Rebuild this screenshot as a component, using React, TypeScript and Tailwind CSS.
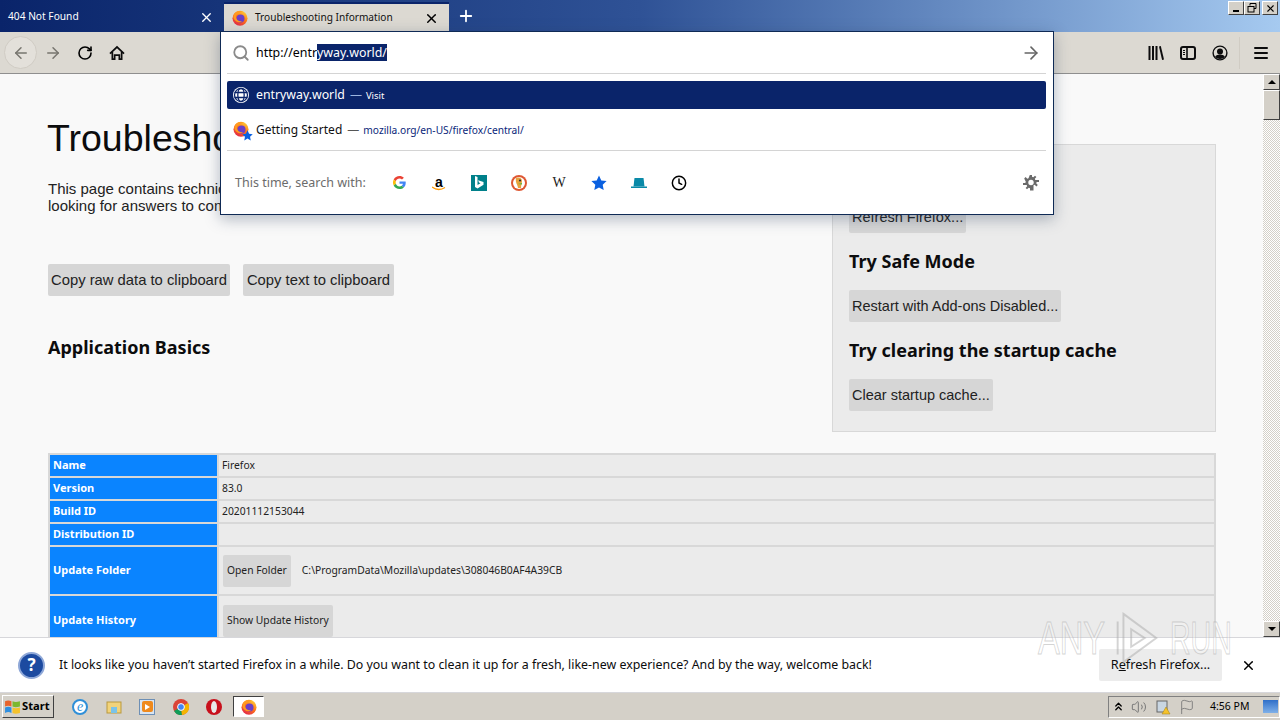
import React from "react";
import { Search, ArrowLeft, ArrowRight, RotateCw, X, Plus, Clock, ChevronsUp, Volume2, Flag } from "lucide-react";

const ui = "font-['Noto_Sans','Liberation_Sans',sans-serif]";

function FirefoxIcon({ size = 16 }: { size?: number }) {
  return (
    <svg width={size} height={size} viewBox="0 0 32 32" className="shrink-0">
      <defs>
        <linearGradient id="ffa" x1="0.8" y1="0" x2="0.2" y2="1">
          <stop offset="0" stopColor="#ffd43a" />
          <stop offset="0.45" stopColor="#ff7a18" />
          <stop offset="1" stopColor="#e0204f" />
        </linearGradient>
      </defs>
      <circle cx="16" cy="16.500" r="15" fill="url(#ffa)" />
      <circle cx="17" cy="17" r="8" fill="#6a3fc8" />
      <path d="M4 9c3-6 11-9 18-5-5-.5-8 1-9 4-3 0-6 3-5 7 1 5 7 9 13 7-6 5-14 2-17-4-1.500-3-1.500-6 0-9z" fill="#ff9a1f" />
    </svg>
  );
}

function LibraryIcon() {
  return (
    <svg width="16" height="16" viewBox="0 0 16 16" fill="#0c0c0d">
      <rect x="0.5" y="1" width="2" height="14" />
      <rect x="4" y="1" width="2" height="14" />
      <rect x="7.5" y="1" width="2" height="14" />
      <path d="M11 1.600l1.800-.6 3.200 13.400-1.900.6z" />
    </svg>
  );
}

function SidebarIcon() {
  return (
    <svg width="16" height="16" viewBox="0 0 16 16" fill="none" stroke="#0c0c0d" strokeWidth="2">
      <rect x="1" y="2" width="14" height="12" rx="2" />
      <path d="M7 2v12" strokeWidth="1.600" />
      <path d="M3 5.500h2M3 7.500h2M3 9.500h2" strokeWidth="1" />
    </svg>
  );
}

function AccountIcon() {
  return (
    <svg width="16" height="16" viewBox="0 0 16 16" fill="none">
      <circle cx="8" cy="8" r="6.900" stroke="#0c0c0d" strokeWidth="1.400" />
      <circle cx="8" cy="6.400" r="3" fill="#0c0c0d" />
      <path d="M3 12c1-2 3-2.600 5-2.600s4 .6 5 2.600c-1.300 1.300-3 1.900-5 1.900s-3.700-.6-5-1.900z" fill="#0c0c0d" />
    </svg>
  );
}

function HomeIcon() {
  return (
    <svg width="16" height="16" viewBox="0 0 16 16" fill="#0c0c0d">
      <path d="M8 .8L.4 8l1.100 1.200 1-.9V15h4v-4h3v4h4V8.300l1 .9L15.600 8 8 .8zM11.800 13.300h-.6v-4H4.800v4h-.6V6.700L8 3.200l3.800 3.500v6.600z" />
    </svg>
  );
}

function MenuIcon() {
  return (
    <svg width="14" height="14" viewBox="0 0 14 14" fill="#0c0c0d">
      <rect y="1" width="14" height="2" rx="1" />
      <rect y="6" width="14" height="2" rx="1" />
      <rect y="11" width="14" height="2" rx="1" />
    </svg>
  );
}

function GearIcon() {
  return (
    <svg width="16" height="16" viewBox="0 0 16 16" fill="#6a6a6a">
      <path d="M7 0h2v2.300l1.300.5L12 1.200l1.400 1.400-1.600 1.700.5 1.200H16v2h-2.300l-.5 1.300 1.600 1.700-1.400 1.400-1.700-1.600-1.200.5V16H7v-2.300l-1.300-.5L4 14.800l-1.400-1.400 1.600-1.700-.5-1.200H0v-2h2.300l.5-1.300L1.200 4l1.400-1.400 1.700 1.600 1.200-.5z" transform="translate(0 -0.5)" />
      <circle cx="8" cy="7.500" r="2.700" fill="#fff" />
    </svg>
  );
}

function GlobeIcon() {
  return (
    <svg width="16" height="16" viewBox="0 0 16 16" className="shrink-0">
      <circle cx="8" cy="8" r="8" fill="#fff" />
      <g fill="none" stroke="#0a246a" strokeWidth="1.300">
        <ellipse cx="8" cy="8" rx="3.200" ry="6.600" />
        <path d="M1.500 5.500h13M1.500 10.500h13" />
        <circle cx="8" cy="8" r="6.500" />
      </g>
    </svg>
  );
}

function WinButton({ children }: { children: React.ReactNode }) {
  return (
    <div className="flex h-[14px] w-[16px] items-center justify-center border border-t-white border-l-white border-r-[#404040] border-b-[#404040] bg-[#d4d0c8]">
      {children}
    </div>
  );
}

function TitleBar() {
  return (
    <div className="flex h-[32px] shrink-0 items-stretch bg-gradient-to-r from-[#0a246a] via-[#2f5296] to-[#a6caf0]">
      <div className="flex w-[224px] items-center pl-[8px] pr-[10px] pt-[2px] text-[10.2px] text-white">
        <span className="flex-1">404 Not Found</span>
        <X size={15} strokeWidth={2.2} className="text-white" />
      </div>
      <div className="mt-[2px] flex w-[225px] items-center border-t-2 border-[#0a246a] bg-[#dcd9d2] pl-[8px] pr-[10px] text-[10.1px] text-[#111]">
        <FirefoxIcon size={16} />
        <span className="ml-[7px] flex-1">Troubleshooting Information</span>
        <X size={15} strokeWidth={2.4} className="text-black" />
      </div>
      <div className="flex w-[34px] items-center justify-center">
        <Plus size={18} strokeWidth={2.4} className="text-white" />
      </div>
      <div className="flex-1" />
      <div className="flex items-start gap-0 pr-[2px] pt-[1px]">
        <WinButton>
          <div className="mt-[6px] h-[2px] w-[6px] bg-black" />
        </WinButton>
        <WinButton>
          <svg width="10" height="10" viewBox="0 0 10 10" fill="none" stroke="#000">
            <path d="M3 2.500V.5h6v5H7" />
            <rect x="1" y="3.500" width="6" height="5.500" />
          </svg>
        </WinButton>
        <div className="ml-[2px]">
          <WinButton>
            <X size={11} strokeWidth={2.4} className="text-black" />
          </WinButton>
        </div>
      </div>
    </div>
  );
}

function NavBar() {
  return (
    <div className="flex h-[42px] shrink-0 items-center border-b border-[#8f8f8f] bg-[#dcd9d2]">
      <div className="ml-[4px] flex h-[33px] w-[33px] items-center justify-center rounded-full border border-[#d0ccc4] bg-[#e3e0da]">
        <ArrowLeft size={18} className="text-[#77756f]" strokeWidth={2} />
      </div>
      <div className="ml-[7px] flex w-[18px] justify-center">
        <ArrowRight size={18} className="text-[#77756f]" strokeWidth={2} />
      </div>
      <div className="ml-[14px] flex w-[18px] justify-center">
        <RotateCw size={16} className="text-black" strokeWidth={2.4} />
      </div>
      <div className="ml-[14px] flex w-[18px] justify-center">
        <HomeIcon />
      </div>
      <div className="flex-1" />
      <div className="flex items-center">
        <div className="flex items-center gap-[16px]">
          <LibraryIcon />
          <SidebarIcon />
          <AccountIcon />
        </div>
        <div className="ml-[11px] h-[32px] w-px bg-[#d0ccc4]" />
        <div className="ml-[14px] mr-[12px]">
          <MenuIcon />
        </div>
      </div>
    </div>
  );
}

function GoogleIcon() {
  return (
    <svg width="13" height="13" viewBox="0 0 48 48">
      <path fill="#EA4335" d="M24 9.500c3.500 0 6.700 1.200 9.200 3.600l6.900-6.900C35.900 2.400 30.400 0 24 0 14.600 0 6.500 5.400 2.600 13.200l8 6.200C12.500 13.700 17.800 9.500 24 9.500z" />
      <path fill="#4285F4" d="M47 24.500c0-1.600-.1-3.100-.4-4.500H24v9h12.900c-.6 3-2.200 5.500-4.700 7.200l7.700 6C44.400 38 47 31.800 47 24.500z" />
      <path fill="#FBBC05" d="M10.600 28.600A14.500 14.500 0 0 1 10.600 19.400l-8-6.200a24 24 0 0 0 0 21.600l8-6.200z" />
      <path fill="#34A853" d="M24 48c6.500 0 11.900-2.100 15.900-5.800l-7.700-6c-2.200 1.500-5 2.300-8.200 2.300-6.200 0-11.500-4.200-13.400-9.900l-8 6.200C6.500 42.600 14.600 48 24 48z" />
    </svg>
  );
}

function AmazonIcon() {
  return (
    <div className="relative flex h-[16px] w-[16px] flex-col items-center">
      <span className="font-['Liberation_Sans',sans-serif] text-[14px] font-bold leading-[14px] text-black">a</span>
      <svg width="14" height="5" viewBox="0 0 14 5" className="absolute bottom-0 left-[1px]">
        <path d="M0 1c4 3 9 3 13 .5" fill="none" stroke="#f90" strokeWidth="1.400" />
      </svg>
    </div>
  );
}

function BingIcon() {
  return (
    <div className="flex h-[16px] w-[16px] items-center justify-center bg-[#00808a]">
      <svg width="10" height="13" viewBox="0 0 10 13" fill="#fff">
        <path d="M1 0l2.500 1v8l3-1.700-1.500-.8-.9-2.300L9.500 6v2.800L3.500 12.500 1 11z" />
      </svg>
    </div>
  );
}

function DuckIcon() {
  return (
    <svg width="16" height="16" viewBox="0 0 16 16">
      <circle cx="8" cy="8" r="8" fill="#de5833" />
      <circle cx="8" cy="8" r="6" fill="#fff" />
      <path d="M5 3c3-1.500 6 0 6 3 0 2-1 4-1 7H7C7 10 4 8 5 3z" fill="#e8a33d" />
      <circle cx="9" cy="5.500" r="1" fill="#123" />
      <path d="M7 9l4-1v1.500z" fill="#4cba3c" />
    </svg>
  );
}

function StarIcon({ size = 16, color = "#0a60e0" }: { size?: number; color?: string }) {
  return (
    <svg width={size} height={size} viewBox="0 0 16 16" fill={color}>
      <path d="M8 .5l2.300 4.900 5.300.7-3.900 3.700 1 5.300L8 12.500 3.300 15.100l1-5.300L.4 6.100l5.300-.7z" />
    </svg>
  );
}

function TabsIcon() {
  return (
    <svg width="16" height="16" viewBox="0 0 16 16" fill="#0a8aa8">
      <path d="M3.500 3h9l1 8.500h-11z" />
      <rect y="11.500" width="16" height="1.500" />
    </svg>
  );
}

function EngineSlot({ children }: { children: React.ReactNode }) {
  return <div className="flex w-[40px] items-center justify-center">{children}</div>;
}

function UrlPopup() {
  return (
    <div className="absolute left-[220px] top-[31px] flex h-[184px] w-[834px] flex-col border border-[#0f2a55] bg-white pl-[6px] pr-[7px] shadow-[0_4px_14px_rgba(40,60,90,0.35)]">
      <div className="flex h-[42px] shrink-0 items-center border-b border-[#d4d4d4] pl-[5px] pr-[5px]">
        <Search size={18} strokeWidth={2.4} className="text-[#8a8a8a]" />
        <div className="ml-[6px] mt-[1px] flex-1 text-[12.4px] leading-[16px] text-black">
          http://entr<span className="bg-[#0a246a] text-white">yway.world/</span>
        </div>
        <ArrowRight size={20} strokeWidth={2} className="text-[#666]" />
      </div>
      <div className="mt-[7px] flex h-[28px] shrink-0 items-center rounded-[2px] bg-[#0a246a] pl-[6px] text-white">
        <GlobeIcon />
        <span className="ml-[7px] mt-[1px] text-[12.3px]">entryway.world</span>
        <span className="ml-[5px] text-[12px] text-[#9cb5e0]">—</span>
        <span className="ml-[4px] mt-[3px] text-[9.500px]">Visit</span>
      </div>
      <div className="flex h-[42px] shrink-0 items-center border-b border-[#d4d4d4] pl-[6px] text-[#111]">
        <div className="relative h-[18px] w-[18px]">
          <FirefoxIcon size={16} />
          <div className="absolute -bottom-[2px] -right-[2px]">
            <StarIcon size={11} />
          </div>
        </div>
        <span className="ml-[5px] text-[12px]">Getting Started</span>
        <span className="ml-[5px] text-[12px] text-[#555]">—</span>
        <span className="ml-[4px] mt-[2px] text-[10.2px] text-[#0a1f7a]">mozilla.org/en-US/firefox/central/</span>
      </div>
      <div className="flex flex-1 items-center pl-[8px] pr-[7px]">
        <span className="mt-[2px] w-[144px] text-[12.5px] text-[#6c6c6c]">This time, search with:</span>
        <div className="flex flex-1 items-center">
          <EngineSlot><GoogleIcon /></EngineSlot>
          <EngineSlot><AmazonIcon /></EngineSlot>
          <EngineSlot><BingIcon /></EngineSlot>
          <EngineSlot><DuckIcon /></EngineSlot>
          <EngineSlot><span className="font-['Liberation_Serif',serif] text-[14px] text-[#222]">W</span></EngineSlot>
          <EngineSlot><StarIcon /></EngineSlot>
          <EngineSlot><TabsIcon /></EngineSlot>
          <EngineSlot><Clock size={16} strokeWidth={2.2} className="text-black" /></EngineSlot>
        </div>
        <GearIcon />
      </div>
    </div>
  );
}

function PageButton({ children, className = "" }: { children: React.ReactNode; className?: string }) {
  return (
    <div className={`inline-flex h-[32px] items-center whitespace-nowrap rounded-[2px] bg-[#d6d6d6] px-[3px] font-['Liberation_Sans',sans-serif] text-[#222] ${className}`}>
      {children}
    </div>
  );
}

function TuneUpBox() {
  const btn = "mt-[16px] pt-[2px] text-[14.500px]";
  return (
    <div className="mt-[70px] h-[288px] w-[384px] shrink-0 border border-[#d8d8d8] bg-[#ebebeb] pl-[16px] pt-[14px]">
      <div className="text-[18px] font-bold leading-[26px] text-[#0c0c0d]">Give Firefox a tune up</div>
      <PageButton className={btn}>Refresh Firefox...</PageButton>
      <div className="mt-[15px] text-[18px] font-bold leading-[26px] text-[#0c0c0d]">Try Safe Mode</div>
      <PageButton className={btn}>Restart with Add-ons Disabled...</PageButton>
      <div className="mt-[15px] text-[18px] font-bold leading-[26px] text-[#0c0c0d]">Try clearing the startup cache</div>
      <PageButton className={btn}>Clear startup cache...</PageButton>
    </div>
  );
}

const rows: { label: string; value?: string; button?: string; h: string; path?: string }[] = [
  { label: "Name", value: "Firefox", h: "h-[21px]" },
  { label: "Version", value: "83.0", h: "h-[21px]" },
  { label: "Build ID", value: "20201112153044", h: "h-[21px]" },
  { label: "Distribution ID", value: "", h: "h-[21px]" },
  { label: "Update Folder", button: "Open Folder", path: "C:\\ProgramData\\Mozilla\\updates\\308046B0AF4A39CB", h: "h-[47px]" },
  { label: "Update History", button: "Show Update History", h: "h-[49px]" },
];

function InfoTable() {
  return (
    <div className="mt-[21px] grid grid-cols-[167px_1fr] gap-[2px] border-2 border-b-0 border-[#d8d8d8] bg-[#d8d8d8] text-[10.300px]">
      {rows.map((r) => (
        <React.Fragment key={r.label}>
          <div className={`flex items-center bg-[#0a84ff] pl-[3px] text-[11px] font-bold text-white ${r.h}`}>{r.label}</div>
          <div className={`flex items-center bg-[#ebebeb] pl-[3px] text-[#222] ${r.h}`}>
            {r.value}
            {r.button && (
              <div className="ml-[1px] flex h-[32px] items-center rounded-[2px] bg-[#d6d6d6] px-[4px]">{r.button}</div>
            )}
            {r.path && <span className="ml-[11px]">{r.path}</span>}
          </div>
        </React.Fragment>
      ))}
    </div>
  );
}

function Page() {
  return (
    <div className="min-w-0 flex-1 overflow-hidden bg-[#f9f9f9] pl-[48px] pr-[47px] text-[#0c0c0d]">
      <div className="flex gap-[12px]">
        <div className="min-w-0 flex-1">
          <h1 className="-ml-[1px] mt-[38px] whitespace-nowrap font-['Liberation_Sans',sans-serif] text-[37.500px] leading-[52px]">Troubleshooting Information</h1>
          <p className="mt-[16px] font-['Liberation_Sans',sans-serif] text-[15px] leading-[17px] text-[#222]">
            This page contains technical information that might be useful when you’re trying to solve a problem.
            <br />
            looking for answers to common questions about Firefox, check out our support website.
          </p>
          <div className="mt-[50px] flex gap-[13px]">
            <PageButton className="w-[182px] justify-center text-[14.800px]">Copy raw data to clipboard</PageButton>
            <PageButton className="w-[151px] justify-center text-[14.800px]">Copy text to clipboard</PageButton>
          </div>
          <h2 className="mt-[38px] text-[18px] font-bold leading-[26px]">Application Basics</h2>
        </div>
        <TuneUpBox />
      </div>
      <InfoTable />
    </div>
  );
}

function Scrollbar() {
  return (
    <div className="flex w-[17px] shrink-0 flex-col bg-[repeating-conic-gradient(#d4d0c8_0%_25%,#ffffff_0%_50%)] bg-[length:2px_2px]">
      <div className="flex h-[16px] items-center justify-center border border-t-white border-l-white border-r-[#404040] border-b-[#404040] bg-[#d4d0c8]">
        <div className="h-0 w-0 border-x-[4px] border-b-[4px] border-x-transparent border-b-black" />
      </div>
      <div className="h-[30px] border border-t-white border-l-white border-r-[#404040] border-b-[#404040] bg-[#d4d0c8]" />
      <div className="flex-1" />
      <div className="flex h-[16px] items-center justify-center border border-t-white border-l-white border-r-[#404040] border-b-[#404040] bg-[#d4d0c8]">
        <div className="h-0 w-0 border-x-[4px] border-t-[4px] border-x-transparent border-t-black" />
      </div>
    </div>
  );
}

function Notification() {
  return (
    <div className="flex h-[56px] shrink-0 items-center border-y border-[#d7d7db] bg-white">
      <div className="ml-[18px] flex h-[27px] w-[27px] items-center justify-center rounded-full border-2 border-[#8fa8d8] bg-[#1c4aa0] text-[17px] font-bold text-white">?</div>
      <span className="ml-[14px] mt-[1px] flex-1 text-[12.380px] text-[#0c0c0d]">
        It looks like you haven’t started Firefox in a while. Do you want to clean it up for a fresh, like-new experience? And by the way, welcome back!
      </span>
      <div className="flex h-[32px] w-[123px] items-center justify-center rounded-[2px] bg-[#ececec] text-[12.700px] text-[#0c0c0d]">
        R<span className="underline">e</span>fresh Firefox...
      </div>
      <X size={15} strokeWidth={2.4} className="ml-[19px] mr-[24px] text-black" />
    </div>
  );
}

function Taskbar() {
  return (
    <div className="flex h-[27px] shrink-0 items-center bg-[#d4d0c8] pl-[2px]">
      <div className="flex h-[23px] w-[52px] items-center border border-t-white border-l-white border-r-[#404040] border-b-[#404040] pl-[1px] text-[11.200px] font-bold text-black">
        <svg width="17" height="15" viewBox="0 0 16 14" className="shrink-0">
          <path d="M1 2c2-1 4-1 6 0v5C5 6 3 6 1 7z" fill="#e8642c" />
          <path d="M8 2c2 1 4 1 7 0v5c-3 1-5 1-7 0z" fill="#7cb82f" />
          <path d="M1 8c2-1 4-1 6 0v5c-2-1-4-1-6 0z" fill="#2f8fe0" />
          <path d="M8 8c2 1 4 1 7 0v5c-3 1-5 1-7 0z" fill="#f5c22b" />
        </svg>
        <span className="ml-[1px]">Start</span>
      </div>
      <div className="ml-[18px] flex items-center gap-[17.500px]">
        <div className="flex h-[16px] w-[16px] items-center justify-center rounded-full border-2 border-[#2f8fd8] bg-white font-['Liberation_Serif',serif] text-[14px] italic leading-none text-[#2f8fd8]">e</div>
        <svg width="16" height="16" viewBox="0 0 16 16">
          <rect x="1" y="3" width="14" height="11" fill="#f2d37a" stroke="#b9993f" />
          <rect x="5" y="8" width="6" height="6" fill="#7bc3e8" />
        </svg>
        <div className="flex h-[16px] w-[16px] items-center justify-center border border-[#6d8fb5] bg-[#d9e5f2]">
          <div className="flex h-[11px] w-[11px] items-center justify-center rounded-[2px] bg-[#ef8a1d]">
            <div className="h-0 w-0 border-y-[3px] border-l-[5px] border-y-transparent border-l-white" />
          </div>
        </div>
        <svg width="16" height="16" viewBox="0 0 16 16">
          <circle cx="8" cy="8" r="8" fill="#db4437" />
          <path d="M8 8L1 12a8 8 0 0 0 8 4z" fill="#0f9d58" />
          <path d="M8 8l1 8a8 8 0 0 0 6-12z" fill="#f4b400" />
          <circle cx="8" cy="8" r="3.400" fill="#4285f4" stroke="#fff" />
        </svg>
        <svg width="16" height="16" viewBox="0 0 16 16">
          <circle cx="8" cy="8" r="8" fill="#c8101c" />
          <ellipse cx="8" cy="8" rx="3" ry="6" fill="#e8e8e8" />
        </svg>
      </div>
      <div className="ml-[11px] flex h-[21px] w-[31px] items-center justify-center border border-t-[#404040] border-l-[#404040] border-r-white border-b-white bg-white">
        <FirefoxIcon size={16} />
      </div>
      <div className="flex-1" />
      <div className="flex h-[22px] w-[172px] shrink-0 items-center border border-t-[#808080] border-l-[#808080] border-r-white border-b-white pl-[3px] text-[#444]">
        <ChevronsUp size={13} strokeWidth={2.4} className="shrink-0 text-black" />
        <Volume2 size={16} strokeWidth={1.5} className="ml-[6px] shrink-0 text-[#777]" />
        <svg width="16" height="16" viewBox="0 0 16 16" className="ml-[8px] shrink-0">
          <rect x="2" y="2" width="10" height="11" fill="#c9d6e2" stroke="#666" />
          <path d="M11 8l4 7H7z" fill="#f5c22b" stroke="#a07d10" strokeWidth="0.500" />
        </svg>
        <Flag size={16} strokeWidth={1.3} className="ml-[8px] shrink-0 text-[#777]" />
        <span className="ml-[15px] w-[40px] shrink-0 whitespace-nowrap text-[10.500px] text-black">4:56 PM</span>
        <div className="ml-[13px] h-[13px] w-[15px] shrink-0 bg-gradient-to-b from-[#2f6fc8] to-[#7fb0e8]" />
      </div>
    </div>
  );
}

export default function App() {
  return (
    <div className={`relative flex h-[720px] w-[1280px] flex-col overflow-hidden bg-[#dcd9d2] ${ui}`}>
      <TitleBar />
      <NavBar />
      <div className="flex min-h-0 flex-1">
        <Page />
        <Scrollbar />
      </div>
      <Notification />
      <Taskbar />
      <UrlPopup />
      <div className="pointer-events-none absolute left-[1038px] top-[610px] flex h-[56px] items-center font-['Liberation_Sans',sans-serif] text-[46px] leading-[56px] text-white/30 [-webkit-text-stroke:1px_rgba(170,170,170,0.5)]">
        <span className="block w-[70px] origin-left scale-x-[0.71]">ANY</span>
        <svg width="56" height="56" viewBox="0 0 54 58" fill="none" stroke="rgba(170,170,170,0.5)" strokeWidth="2">
          <path d="M8 12v34M14 4l34 25-34 25zM22 20l14 9-14 9z" />
        </svg>
        <span className="ml-[6px] block w-[62px] origin-left scale-x-[0.62]">RUN</span>
      </div>
    </div>
  );
}
